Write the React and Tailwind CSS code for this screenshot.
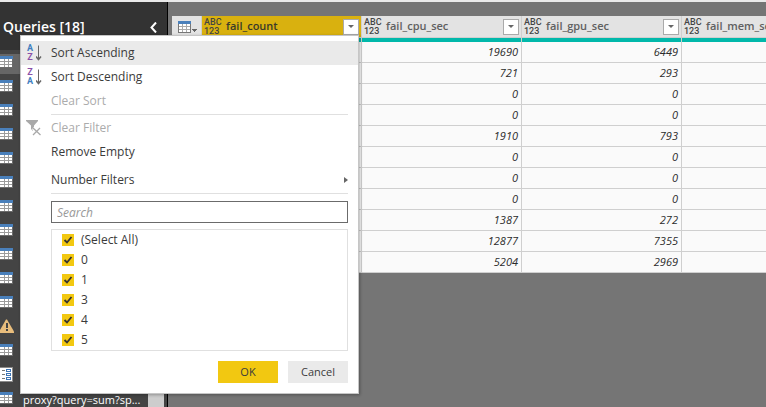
import React from "react";

const columns = ["fail_count", "fail_cpu_sec", "fail_gpu_sec", "fail_mem_sec"];

const rows = [
  ["19690", "6449"],
  ["721", "293"],
  ["0", "0"],
  ["0", "0"],
  ["1910", "793"],
  ["0", "0"],
  ["0", "0"],
  ["0", "0"],
  ["1387", "272"],
  ["12877", "7355"],
  ["5204", "2969"],
];

const filterValues = ["(Select All)", "0", "1", "3", "4", "5"];

const queries = [
  "table", "table", "table", "table", "table", "table", "table", "table",
  "table", "table", "table", "warning", "table", "parameters", "table",
];

function QueryTableIcon() {
  return (
    <svg width="13" height="12" viewBox="0 0 13 12" shapeRendering="crispEdges" aria-hidden="true">
      <rect width="13" height="12" fill="#6b6b6b" />
      <rect width="13" height="3" fill="#4a80bb" />
      <path d="M0 3h12v8H0z" fill="#fff" />
      <path d="M0 5h12v1H0zM0 8h12v1H0zM4 3h1v8H4zM8 3h1v8H8z" fill="#9c9c9c" />
    </svg>
  );
}

function WarningIcon() {
  return (
    <svg width="14" height="14" viewBox="0 0 14 14" aria-hidden="true">
      <path d="M6 0.5h1L14 12.5V14H0V11z" fill="#e8bd7c" />
      <path d="M6 4h2v5H6zM6 10h2v2H6z" fill="#444" />
    </svg>
  );
}

function ParametersIcon() {
  return (
    <svg width="13" height="15" viewBox="0 0 13 15" shapeRendering="crispEdges" aria-hidden="true">
      <rect width="13" height="15" fill="#8a8a8a" />
      <path d="M0 1h12v13H0z" fill="#fff" />
      <path d="M2 3h3v1H2zM2 7h3v1H2zM2 11h3v1H2z" fill="#777" />
      <path d="M6.5 2.5h4v2h-4zM6.5 6.5h4v2h-4zM6.5 10.5h4v2h-4z" fill="#fff" stroke="#3f76b5" />
    </svg>
  );
}

function GridIcon() {
  return (
    <svg width="19" height="12" viewBox="0 0 19 12" shapeRendering="crispEdges" aria-hidden="true">
      <rect width="13" height="12" fill="#777" />
      <rect width="13" height="3" fill="#4a80bb" />
      <path d="M1 3h11v8H1z" fill="#fff" />
      <path d="M1 5h11v1H1zM1 8h11v1H1zM4 3h1v8H4zM8 3h1v8H8z" fill="#aaa" />
      <path d="M14 8h5v1h-1v1h-1v1h-1v-1h-1V9h-1z" fill="#666" />
    </svg>
  );
}

function SortIcon({ top, bottom, topClass, bottomClass }) {
  return (
    <span className="flex items-center gap-0.5" aria-hidden="true">
      <span className="flex w-2 flex-col items-center font-['Roboto',sans-serif] text-[9px] leading-[9px] font-bold">
        <span className={topClass}>{top}</span>
        <span className={bottomClass}>{bottom}</span>
      </span>
      <svg width="6" height="16" viewBox="0 0 6 16" fill="none" stroke="#666">
        <path d="M2.500 0.500v14" />
        <path d="M0 11.500L2.500 14.500l2.500-3" strokeWidth="1.500" />
      </svg>
    </span>
  );
}

function ClearFilterIcon() {
  return (
    <svg width="16" height="16" viewBox="0 0 16 16" aria-hidden="true">
      <path d="M0 0h12v1L8 5.500v2.500L7 9v2L5 9V5.500L0 1z" fill="#a9a9a9" />
      <path d="M7 8l8 7M14.500 8L7 15" stroke="#fff" strokeWidth="3" />
      <path d="M7 8l7.500 7M14 8l-7 7" stroke="#a9a9a9" strokeWidth="1.300" />
    </svg>
  );
}

function MenuItem({ icon, children, disabled, active, submenu }) {
  return (
    <button
      type="button"
      role="menuitem"
      disabled={disabled}
      className={`flex h-6 w-full items-center pl-[5px] pr-2.5 text-left ${
        active ? "bg-[#eaeaea]" : ""
      } ${disabled ? "text-[#ababab]" : "text-[#3b3b3b]"}`}
    >
      <span className="flex w-[25px] shrink-0">{icon}</span>
      <span className="flex-1">{children}</span>
      {submenu && (
        <svg width="4" height="6" viewBox="0 0 4 6" aria-hidden="true">
          <path d="M0 0l4 3-4 3z" fill="#666" />
        </svg>
      )}
    </button>
  );
}

function Separator() {
  return <hr className="mr-2.5 ml-[30px] border-t border-[#e0e0e0]" />;
}

function FilterOption({ label }) {
  return (
    <label className="flex h-5 items-center gap-[7px] pl-2.5">
      <span className="grid size-3">
        <input
          type="checkbox"
          defaultChecked
          className="col-start-1 row-start-1 size-3 appearance-none bg-[#f2c811]"
        />
        <svg className="pointer-events-none col-start-1 row-start-1" width="12" height="12" viewBox="0 0 12 12" aria-hidden="true">
          <path d="M2.500 6L5 8.500l4.500-5.500" fill="none" stroke="#333" strokeWidth="1.800" />
        </svg>
      </span>
      {label}
    </label>
  );
}

function FilterMenu() {
  return (
    <div
      role="menu"
      className="absolute top-[35px] left-5 w-[339px] border border-[#c6c6c6] bg-white pt-[5px] pb-2.5 text-[#3b3b3b] shadow-[1px_1px_3px_rgba(0,0,0,0.3)]"
    >
      <MenuItem active icon={<SortIcon top="A" bottom="Z" topClass="text-[#3f7fbf]" bottomClass="text-[#8a4fa8]" />}>
        Sort Ascending
      </MenuItem>
      <MenuItem icon={<SortIcon top="Z" bottom="A" topClass="text-[#8a4fa8]" bottomClass="text-[#3f7fbf]" />}>
        Sort Descending
      </MenuItem>
      <MenuItem disabled>Clear Sort</MenuItem>
      <div className="py-px">
        <Separator />
      </div>
      <MenuItem disabled icon={<ClearFilterIcon />}>Clear Filter</MenuItem>
      <MenuItem>Remove Empty</MenuItem>
      <div className="pt-1">
        <MenuItem submenu>Number Filters</MenuItem>
      </div>
      <div className="pt-px">
        <Separator />
      </div>
      <div className="mt-[7px] mr-2.5 ml-[30px]">
        <input
          type="text"
          aria-label="Search"
          placeholder="Search"
          className="block h-[22px] w-full border border-[#6b6b6b] px-[5px] placeholder:text-[#999] placeholder:italic"
        />
        <div className="mt-1.5 border border-[#e0e0e0]">
          {filterValues.map((value) => (
            <FilterOption key={value} label={value} />
          ))}
        </div>
        <div className="mt-2.5 flex justify-end gap-2.5 text-[11px]">
          <button type="button" className="h-[22px] w-[60px] bg-[#f2c811]">OK</button>
          <button type="button" className="h-[22px] w-[60px] bg-[#eaeaea]">Cancel</button>
        </div>
      </div>
    </div>
  );
}

function QueriesPane() {
  return (
    <aside className="flex w-[168px] shrink-0 flex-col border-r border-black bg-[#444] text-white">
      <header className="flex h-12 shrink-0 items-center justify-between bg-[#333] pt-0.5 pr-2.5 pl-[3px]">
        <h2 className="text-sm font-semibold">Queries [18]</h2>
        <button type="button" aria-label="Collapse queries">
          <svg width="7" height="11" viewBox="0 0 7 11" fill="none" stroke="#fff" strokeWidth="2">
            <path d="M6 0.500L1.500 5.500 6 10.500" />
          </svg>
        </button>
      </header>
      <div className="flex min-h-0 flex-1 overflow-hidden">
        <ul className="min-w-0 flex-1">
          {queries.map((kind, i) => (
            <li key={i} className="h-6 pt-1">
              <span className={`flex h-5 gap-[9px] ${i === 0 ? "bg-[#666]" : ""}`}>
                <span className="flex h-4 w-3.5 shrink-0 items-center">
                  {kind === "table" && <QueryTableIcon />}
                  {kind === "warning" && <WarningIcon />}
                  {kind === "parameters" && <ParametersIcon />}
                </span>
                {i === queries.length - 1 && (
                  <span className="text-[11px] leading-5 whitespace-nowrap">proxy?query=sum?sp...</span>
                )}
              </span>
            </li>
          ))}
        </ul>
        <div className="mr-[3px] w-4 shrink-0 bg-[#cdcdcd]" />
      </div>
    </aside>
  );
}

function ColumnHeader({ name, selected }) {
  return (
    <th
      scope="col"
      className={`border-r border-[#cfcfcf] p-0 text-left font-semibold ${
        selected ? "bg-[#d9b10f] text-[#3a3a2a]" : "bg-[#e3e3e3] text-[#606060]"
      }`}
    >
      <div className="flex h-[21px] items-center pr-[2px] pl-0.5">
        <span
          className="flex w-[22px] shrink-0 flex-col font-['Roboto',sans-serif] text-[9px] leading-[9px] font-medium text-[#444]"
          aria-hidden="true"
        >
          <span>ABC</span>
          <span>123</span>
        </span>
        <span className="flex-1 text-[11px]">{name}</span>
        <button
          type="button"
          aria-label={`Filter ${name}`}
          className="flex size-4 items-center justify-center border border-[#aaa] bg-white"
        >
          <svg width="6" height="3" viewBox="0 0 6 3" aria-hidden="true">
            <path d="M0 0h6L3 3z" fill="#666" />
          </svg>
        </button>
      </div>
    </th>
  );
}

function DataGrid() {
  return (
    <table className="w-[670px] table-fixed border-separate border-spacing-0">
      <colgroup>
        <col className="w-[30px]" />
        <col className="w-40" />
        <col className="w-40" />
        <col className="w-40" />
        <col className="w-40" />
      </colgroup>
      <thead>
        <tr>
          <th scope="col" className="border-r border-[#cfcfcf] bg-[#e3e3e3] p-0">
            <button type="button" aria-label="Table options" className="flex h-[21px] w-full items-center pl-1.5">
              <GridIcon />
            </button>
          </th>
          {columns.map((name, i) => (
            <ColumnHeader key={name} name={name} selected={i === 0} />
          ))}
        </tr>
        <tr aria-hidden="true">
          {["index", ...columns].map((name) => (
            <td key={name} className="h-[5px] border-t border-r border-[#cfcfcf] bg-[#01b8aa] p-0" />
          ))}
        </tr>
      </thead>
      <tbody>
        {rows.map(([cpu, gpu], i) => (
          <tr key={i} className="text-right text-[11px] leading-5 text-[#2b2b2b] italic">
            {["", "", cpu, gpu, ""].map((value, c) => (
              <td key={c} className="h-[21px] border-r border-b border-[#cfcfcf] bg-[#fafafa] py-0 pr-[3px] pl-0">
                {value}
              </td>
            ))}
          </tr>
        ))}
      </tbody>
    </table>
  );
}

export default function App() {
  return (
    <div className="relative flex h-screen flex-col overflow-hidden bg-[#757575] font-['Open_Sans','Noto_Sans',sans-serif] text-[12px]">
      <div className="h-0.5 shrink-0 bg-[#eaeaea]" />
      <div className="flex min-h-0 flex-1">
        <QueriesPane />
        <main className="min-w-0 flex-1 overflow-hidden pt-3.5 pl-1">
          <DataGrid />
        </main>
      </div>
      <FilterMenu />
    </div>
  );
}
